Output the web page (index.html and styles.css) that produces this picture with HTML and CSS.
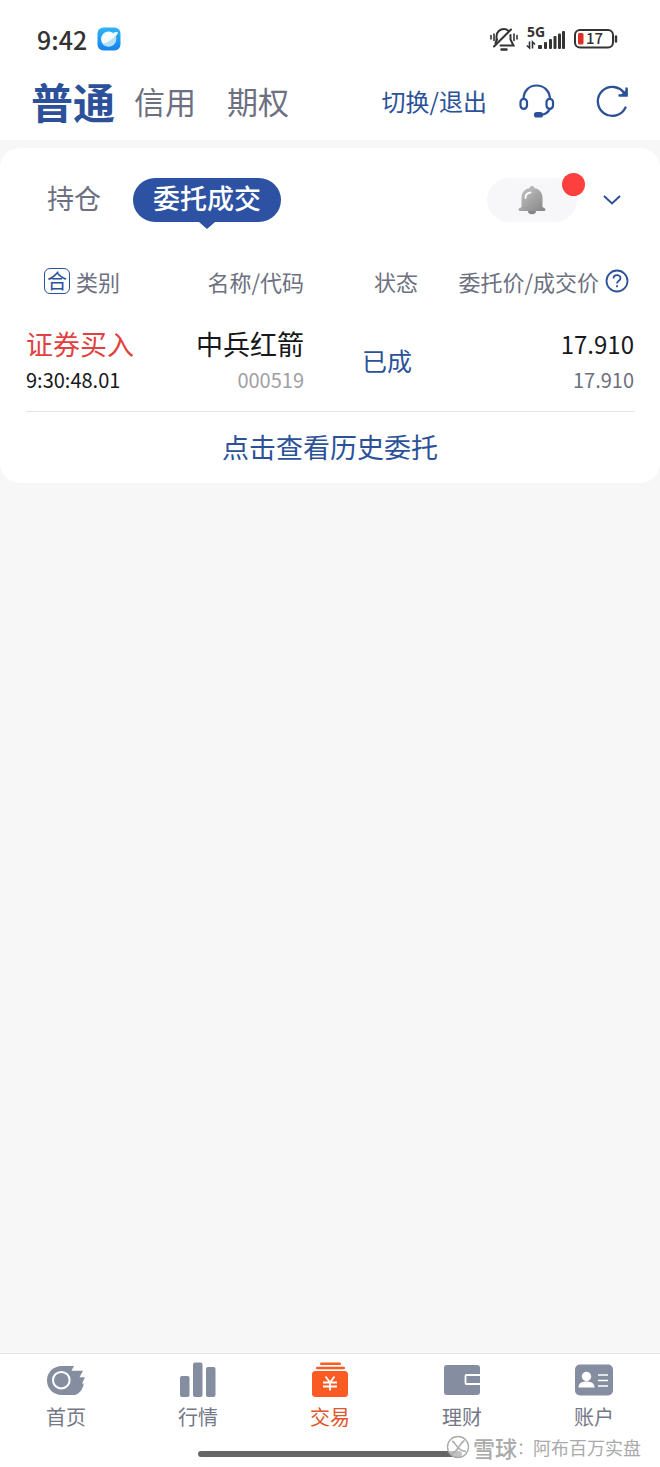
FILE: index.html
```
<!DOCTYPE html>
<html lang="zh-CN">
<head>
<meta charset="utf-8">
<meta name="viewport" content="width=device-width, initial-scale=1">
<title>委托成交</title>
<link rel="stylesheet" href="styles.css">
</head>
<body>
<div class="app">
  <div class="status-bar">
    <div class="status-left">
      <span class="clock">9:42</span>
      <svg class="app-badge" width="24" height="24" viewBox="0 0 24 24" aria-hidden="true">
        <defs><linearGradient id="sky" x1="0" y1="0" x2="0" y2="1"><stop offset="0" stop-color="#2fb4f8"/><stop offset="1" stop-color="#1583ee"/></linearGradient></defs>
        <rect x="0.5" y="0.5" width="23" height="23" rx="6" fill="url(#sky)"/>
        <circle cx="11.6" cy="12" r="7.6" fill="#f4fcff"/>
        <path d="M16 6C18.500 5 20.500 4.800 20.800 5.500C21.100 6.300 20 8 18 10.200Z" fill="#eaf9ff"/>
        <path d="M5.500 16.800C11 15.500 16 11.500 18.800 8.500C20.500 14 16.500 19.600 11.500 19.600C9 19.600 6.800 18.600 5.500 16.800Z" fill="#b5e0f8"/>
      </svg>
    </div>
    <div class="status-right">
      <svg width="28" height="24" viewBox="0 0 28 24" fill="none" stroke="#333" stroke-width="2" stroke-linecap="round" aria-hidden="true">
        <path d="M4 19.500L21 2.500"/>
        <path d="M6.500 13V9.500C6.500 5 10 2 14 2C15.500 2 17 2.500 18 3.500"/>
        <path d="M20.500 8V12.500L23.500 18.500H10.500M5.500 16L7 12.500"/>
        <path d="M11.500 22.500H16.500" stroke-width="2.400"/>
        <path d="M1 8.500V12M4 7V13.500M24 7V13.500M27 8.500V12" stroke-width="1.600"/>
      </svg>
      <svg width="40" height="36" viewBox="0 -6 40 36" aria-hidden="true">
        <text class="net-label" x="1" y="10">5G</text>
        <g fill="#333"><rect x="12" y="18" width="4" height="4" rx="1"/><rect x="18" y="15" width="3" height="7" rx="1"/><rect x="23" y="12" width="3" height="10" rx="1"/><rect x="27.500" y="9" width="3" height="13" rx="1"/><rect x="32" y="6.500" width="3" height="15.500" rx="1"/><rect x="36" y="4" width="3" height="18" rx="1"/></g>
        <path d="M3.500 14.500V21L0.800 18.500M6.500 21.500V15L9 17.500" stroke="#333" stroke-width="1.600" fill="none"/>
      </svg>
      <svg width="44" height="32" viewBox="0 -6 44 32" aria-hidden="true">
        <rect x="1" y="1" width="38" height="17.500" rx="5" fill="none" stroke="#333" stroke-width="2"/>
        <rect x="4" y="4" width="5.500" height="11.500" rx="1.500" fill="#dc2f25"/>
        <path d="M42 7.500V12.500" stroke="#333" stroke-width="2.400" stroke-linecap="round"/>
        <text class="battery-label" x="12" y="15">17</text>
      </svg>
    </div>
  </div>

  <header class="top-nav">
    <nav class="modes">
      <a class="mode mode-active" href="#">普通</a>
      <a class="mode" href="#">信用</a>
      <a class="mode" href="#">期权</a>
    </nav>
    <div class="top-actions">
      <button class="text-button" type="button">切换/退出</button>
      <button class="icon-button" type="button" aria-label="客服">
        <svg width="36" height="34" viewBox="0 0 36 34" fill="none" stroke="#2b5299" stroke-width="2.200">
          <path d="M4.500 15.500C4.500 6.500 10.500 1.500 17.500 1.500S31 6.500 31 15.500"/>
          <rect x="1.500" y="14.800" width="6.500" height="10" rx="3.250"/>
          <rect x="27.500" y="14.800" width="6.500" height="10" rx="3.250"/>
          <path d="M31 24.500C29.500 28 26.500 30.500 22 30.800"/>
          <rect x="16" y="29" width="7" height="3.500" rx="1.750" fill="#2b5299"/>
        </svg>
      </button>
      <button class="icon-button" type="button" aria-label="刷新">
        <svg width="34" height="34" viewBox="0 0 34 34" fill="none" stroke="#2b5299" stroke-width="2.300">
          <path d="M30.500 23.500A14.500 14.500 0 1 1 29.500 9.500" stroke-linecap="round"/>
          <path d="M31.500 3.500V11.300H23.500"/>
          <path d="M31.500 7V11.300H27Z" fill="#2b5299"/>
        </svg>
      </button>
    </div>
  </header>

  <main class="card">
    <div class="tabs">
      <button class="tab" type="button">持仓</button>
      <button class="tab tab-active" type="button">委托成交</button>
      <div class="tab-tools">
        <button class="bell-button" type="button" aria-label="提醒">
          <svg width="28" height="30" viewBox="0 0 28 30">
            <defs><linearGradient id="bell" x1="0" y1="0" x2="1" y2="1"><stop offset="0" stop-color="#c4c4c4"/><stop offset="1" stop-color="#858585"/></linearGradient></defs>
            <circle cx="14" cy="3.500" r="2.500" fill="#b5b5b5"/>
            <ellipse cx="14" cy="26" rx="4" ry="3.200" fill="#858585"/>
            <path d="M3.500 22V13C3.500 6 8 3 14 3S24.500 6 24.500 13V22L27 23.500C28 24.500 27.400 26 26 26H2C0.600 26 0 24.500 1 23.500Z" fill="url(#bell)"/>
            <path d="M7.500 13C7.500 10 9.500 7.800 12.500 7.500" stroke="#fff" stroke-width="2" stroke-linecap="round" fill="none"/>
          </svg>
          <span class="dot"></span>
        </button>
        <button class="icon-button" type="button" aria-label="展开">
          <svg width="18" height="10" viewBox="0 0 18 10" fill="none" stroke="#2b5299" stroke-width="2"><path d="M1 1L9 8.500L17 1"/></svg>
        </button>
      </div>
    </div>

    <table class="orders">
      <colgroup><col class="col-type"><col class="col-name"><col class="col-state"><col></colgroup>
      <thead>
        <tr>
          <th class="head-type"><span class="head-group"><span class="merge">合</span>类别</span></th>
          <th>名称/代码</th>
          <th>状态</th>
          <th class="head-price"><span class="head-group">委托价/成交价
            <svg width="24" height="24" viewBox="0 0 24 24" fill="none" stroke="#2b5299" stroke-width="1.800" aria-hidden="true"><circle cx="12" cy="12" r="10.500"/><path d="M8.500 9.500C8.500 5 15.500 5 15.500 9.300C15.500 11.800 12 11.800 12 14.500"/><path d="M12 16.200V18.300"/></svg>
          </span></th>
        </tr>
      </thead>
      <tbody>
        <tr>
          <td class="cell-type"><div class="main buy">证券买入</div><div class="sub">9:30:48.01</div></td>
          <td><div class="main">中兵红箭</div><div class="sub code">000519</div></td>
          <td class="state">已成</td>
          <td><div class="main price">17.910</div><div class="sub deal">17.910</div></td>
        </tr>
      </tbody>
    </table>
    <a class="history" href="#">点击查看历史委托</a>
  </main>

  <footer class="bottom">
    <nav class="tab-bar">
      <a class="tab-item" href="#">
        <svg width="38" height="36" viewBox="0 0 38 36"><path d="M15 4H27L24.500 8.800H36L32.500 15.200H38L35 21.500H36.800C36 26 34 29.500 31 31.500C29.500 32.600 28 33 26 33H15C6 33 0 26.500 0 18.500S6 4 15 4Z" fill="#858da1"/><circle cx="14.300" cy="18.200" r="8.300" fill="none" stroke="#fff" stroke-width="2"/></svg>
        首页</a>
      <a class="tab-item" href="#">
        <svg width="38" height="36" viewBox="0 0 38 36" fill="#858da1"><rect x="1" y="14" width="9.500" height="21" rx="2"/><rect x="14" y="0.500" width="9.500" height="34.500" rx="2"/><rect x="27" y="5" width="9.500" height="30" rx="2"/></svg>
        行情</a>
      <a class="tab-item tab-current" href="#" aria-current="page">
        <svg width="38" height="36" viewBox="0 0 38 36"><g fill="#fa5b22"><rect x="9" y="0.500" width="21" height="2.500" rx="1.200"/><rect x="5" y="4.700" width="29" height="2.500" rx="1.200"/><rect x="1" y="9" width="36" height="26" rx="3.500"/></g><path d="M14.500 14.500L19 20.500L23.500 14.500M19 20.500V28.500M12 20.500H26M12 24.500H26" stroke="#fff" stroke-width="1.800" fill="none"/></svg>
        交易</a>
      <a class="tab-item" href="#">
        <svg width="38" height="36" viewBox="0 0 38 36"><rect x="1" y="3" width="36" height="30" rx="3" fill="#858da1"/><path d="M38 13H23.500Q22.500 13 22.500 14V21Q22.500 22 23.500 22H38" fill="none" stroke="#fff" stroke-width="1.800"/></svg>
        理财</a>
      <a class="tab-item" href="#">
        <svg width="38" height="36" viewBox="0 0 38 36"><rect x="0" y="2.500" width="38" height="31" rx="5" fill="#858da1"/><g fill="#fff"><circle cx="11.500" cy="14.500" r="4.700"/><path d="M3.500 25.500C3.500 21.500 6.500 19.500 11.500 19.500S19.500 21.500 19.500 25.500Z"/></g><path d="M23 13H33M23 18.500H33M23 24H33" stroke="#fff" stroke-width="1.600"/></svg>
        账户</a>
    </nav>
    <div class="home-indicator"></div>
    <div class="watermark">
      <svg width="24" height="24" viewBox="0 0 24 24" aria-hidden="true"><circle cx="12" cy="12" r="10.500" fill="#fff" fill-opacity="0.600" stroke="#aaa" stroke-width="1.300"/><path d="M6 6C8 6.500 9 9 11.500 12C13.500 14.500 15.500 16 20 16.500M18.500 5.500C16 7 14.500 9.500 12.500 12.500C11 15 9.500 17.500 5.500 18.500" fill="none" stroke="#aaa" stroke-width="1.500"/></svg>
      <span class="brand">雪球</span><span class="colon">：</span><span>阿布百万实盘</span>
    </div>
  </footer>
</div>
</body>
</html>
```
FILE: styles.css
```
* {
  box-sizing: border-box;
}

body {
  margin: 0;
  background: #f7f7f8;
  color: #17181c;
  font-family: "Noto Sans CJK SC", sans-serif;
}

button {
  margin: 0;
  padding: 0;
  border: 0;
  background: none;
  font: inherit;
  color: inherit;
}

a {
  color: inherit;
  text-decoration: none;
}

svg {
  display: block;
  flex: none;
}

.app {
  display: flex;
  flex-direction: column;
  min-height: 100vh;
}

.status-bar {
  display: flex;
  align-items: center;
  justify-content: space-between;
  height: 64px;
  padding: 14px 42px 0 37px;
  background: #fff;
}

.status-left {
  display: flex;
  align-items: center;
  gap: 10px;
}

.clock {
  font-size: 25px;
  font-weight: 500;
  line-height: 32px;
  color: #333;
}

.status-right {
  display: flex;
  align-items: center;
  gap: 8px;
}

.net-label {
  font: 700 14px "Noto Sans", sans-serif;
  fill: #333;
}

.battery-label {
  font: 500 15px "Noto Sans CJK SC", sans-serif;
  fill: #333;
}

.top-nav {
  display: flex;
  align-items: center;
  justify-content: space-between;
  height: 76px;
  padding: 0 31px 3px;
  background: #fff;
}

.modes {
  display: flex;
  align-items: center;
  gap: 31px;
}

.mode {
  font-size: 31px;
  line-height: 48px;
  color: #6d7080;
}

.mode-active {
  margin-right: -12px;
  font-size: 42px;
  font-weight: 700;
  color: #2d509b;
}

.top-actions {
  display: flex;
  align-items: center;
  gap: 40px;
}

.text-button {
  margin-right: -8px;
  font-size: 24px;
  line-height: 36px;
  color: #2b5299;
}

.card {
  margin-top: 8px;
  border-radius: 20px;
  background: #fff;
}

.tabs {
  display: flex;
  align-items: center;
  padding: 30px 39px 0 47px;
}

.tab {
  padding-bottom: 4px;
  font-size: 27px;
  line-height: 40px;
  color: #6d7080;
}

.tab-active {
  position: relative;
  margin-left: 32px;
  padding: 0 20px 4px;
  border-radius: 22px;
  background: #2d52a3;
  font-weight: 500;
  color: #fff;
}

.tab-active::after {
  content: "";
  position: absolute;
  top: 100%;
  left: 50%;
  margin-left: -8px;
  border: 8px solid transparent;
  border-top: 7px solid #2d52a3;
  border-bottom: 0;
}

.tab-tools {
  display: flex;
  align-items: center;
  gap: 26px;
  margin-left: auto;
}

.bell-button {
  position: relative;
  display: flex;
  align-items: center;
  justify-content: center;
  width: 90px;
  height: 44px;
  border-radius: 22px;
  background: #f7f7f9;
}

.dot {
  position: absolute;
  top: -5px;
  right: -8px;
  width: 23px;
  height: 23px;
  border-radius: 50%;
  background: #fd403d;
}

.orders {
  width: calc(100% - 52px);
  margin: 37px 26px 0;
  border-collapse: collapse;
  table-layout: fixed;
  border-bottom: 1px solid #e4e4e8;
}

.col-type {
  width: 150px;
}

.col-name {
  width: 128px;
}

.col-state {
  width: 114px;
}

.orders th,
.orders td {
  padding: 0;
  text-align: right;
  white-space: nowrap;
}

.orders th {
  font-size: 22px;
  font-weight: 400;
  line-height: 44px;
  color: #6d7080;
}

.orders .head-type {
  padding-left: 18px;
  text-align: left;
}

.orders .head-price {
  padding-right: 5px;
}

.head-group {
  display: inline-flex;
  align-items: center;
  gap: 6px;
  vertical-align: top;
}

.merge {
  width: 26px;
  height: 26px;
  border: 1px solid #2b5299;
  border-radius: 6px;
  font-size: 20px;
  line-height: 24px;
  text-align: center;
  color: #2b5299;
}

.orders td {
  padding: 21px 0 15px;
}

.orders .cell-type {
  text-align: left;
}

.main {
  font-size: 27px;
  line-height: 40px;
}

.buy {
  color: #e2413f;
}

.price {
  font-size: 24px;
}

.sub {
  font-size: 20px;
  line-height: 32px;
}

.code {
  color: #a0a0a5;
}

.deal {
  color: #6d7080;
}

.orders .state {
  padding-right: 6px;
  font-size: 25px;
  color: #2b5299;
}

.history {
  display: block;
  padding: 15px 0 16px;
  font-size: 27px;
  line-height: 40px;
  text-align: center;
  color: #2b5299;
}

.bottom {
  position: relative;
  margin-top: auto;
  padding-bottom: 10px;
  border-top: 1px solid #e4e4e6;
  background: #fff;
}

.tab-bar {
  display: flex;
  padding: 8px 0 20px;
}

.tab-item {
  display: flex;
  flex: 1;
  flex-direction: column;
  align-items: center;
  gap: 5px;
  font-size: 20px;
  line-height: 28px;
  color: #747887;
}

.tab-current {
  color: #e0552b;
}

.home-indicator {
  width: 40%;
  height: 6px;
  margin: 0 auto;
  border-radius: 3px;
  background: #666;
}

.watermark {
  position: absolute;
  right: 19px;
  bottom: 6px;
  display: flex;
  align-items: center;
  font-size: 18px;
  line-height: 28px;
  color: #aaa;
}

.brand {
  margin-left: 3px;
  font-size: 22px;
  font-weight: 500;
}

.colon {
  font-size: 16px;
}
```
